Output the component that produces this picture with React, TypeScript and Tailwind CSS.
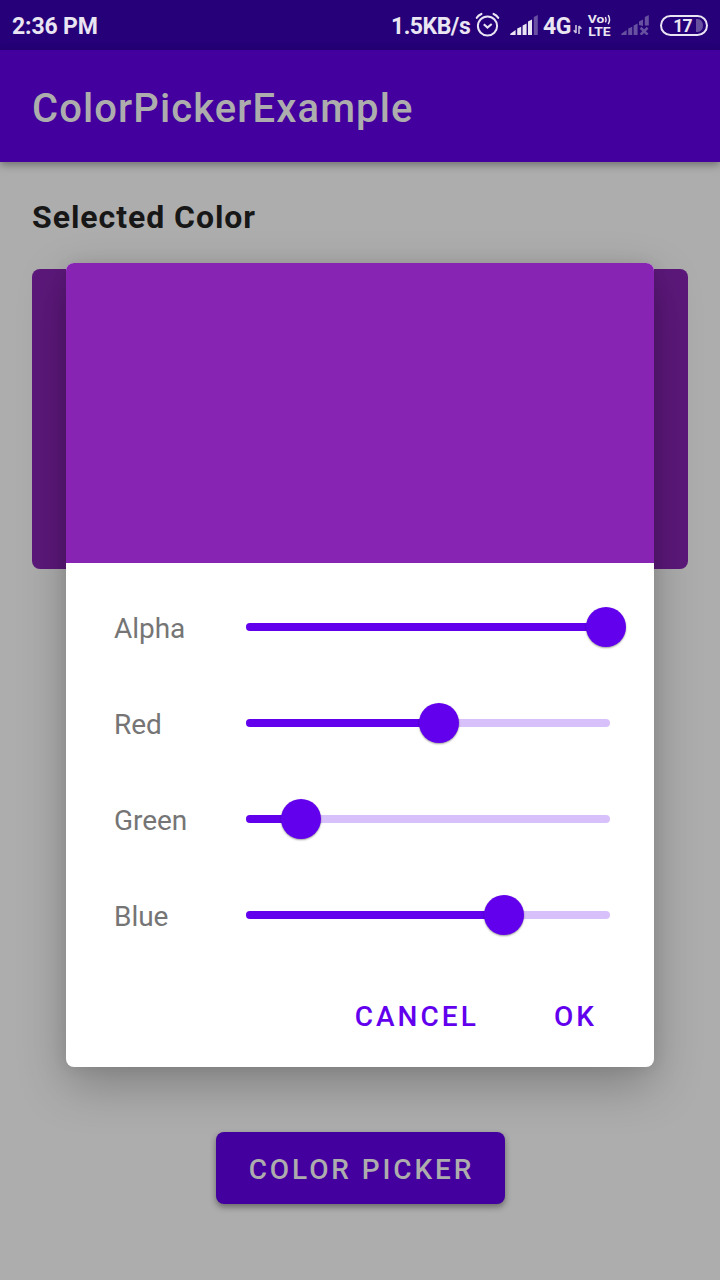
import { useState } from 'react';

type Channel = { name: string; thumb: number };

const CHANNELS: Channel[] = [
  { name: 'Alpha', thumb: 360 },
  { name: 'Red', thumb: 193 },
  { name: 'Green', thumb: 55 },
  { name: 'Blue', thumb: 258 },
];

function AlarmIcon() {
  return (
    <svg className="ml-[6px] shrink-0" width="25" height="26" viewBox="0 0 25 26" fill="none" stroke="#e9e5f2" strokeLinecap="round">
      <circle cx="12.5" cy="14" r="9.6" strokeWidth="2" />
      <path d="M8.8 12.2l3.7 3.4 4.2-3.6" strokeWidth="2.1" strokeLinecap="butt" />
      <path d="M1.8 5.8C2.8 4 4.4 2.7 6.4 1.9M23.2 5.8c-1-1.8-2.6-3.1-4.6-3.9" strokeWidth="2.2" />
    </svg>
  );
}

function SignalIcon() {
  return (
    <svg className="ml-[10px] shrink-0" width="28" height="20" viewBox="0 0 28 20" fill="#e9e5f2">
      <path d="M0.3 20v-1.2L5.6 15V20z" />
      <path d="M7.2 13.4l4-1.6V20h-4zM12.6 10.4l4-1.8V20h-4zM18 6.6l4-2V20h-4z" />
      <path d="M23.8 2l4-2V20h-4z" opacity="0.35" />
    </svg>
  );
}

function NoSignalIcon() {
  return (
    <svg className="ml-[9px] shrink-0" width="28" height="20" viewBox="0 0 28 20" fill="#66509f">
      <path d="M0.3 20v-1.2L5.6 15V20z" />
      <path d="M7.2 13.4l4-1.6V20h-4zM12.6 10.4l4-1.8V20h-4zM18 6.6l4-2V11l-4-1zM23.8 2l4-2V10.6h-4z" />
      <path d="M19.6 12.8l7 6.8M26.6 12.8l-7 6.8" stroke="#66509f" strokeWidth="2.6" />
    </svg>
  );
}

function DataArrows() {
  return (
    <svg className="ml-[2px] mt-[9px] shrink-0" width="9" height="9" viewBox="0 0 9 9" fill="none" stroke="#c8c0dd" strokeWidth="1.6">
      <path d="M3 0v8M3 8L0.8 5.2M6 9V1M6 1l2.4 2.8" />
    </svg>
  );
}

function VolteIcon() {
  return (
    <svg className="ml-[6px] shrink-0 overflow-visible" width="24" height="24" viewBox="0 0 24 24" fill="#e9e5f2" fontFamily="Roboto, sans-serif" fontWeight="700">
      <text x="-0.3" y="10.4" fontSize="11.8" textLength="16.6" lengthAdjust="spacingAndGlyphs">Vo</text>
      <path d="M17.4 4q1.4 2.7 0 5.4M20.2 2.2q2.6 4.5 0 9" fill="none" stroke="#e9e5f2" strokeWidth="1.5" />
      <text x="0.3" y="22.8" fontSize="12.4" textLength="22.4" lengthAdjust="spacingAndGlyphs">LTE</text>
    </svg>
  );
}

function Battery() {
  return (
    <div className="relative ml-[11px] flex h-[21px] w-12 shrink-0 items-center justify-center rounded-full border-2 border-[#e9e5f2]">
      <span className="mr-[3px] mt-px text-[17.5px] font-bold leading-[18px] tracking-[-0.8px]">17</span>
      <svg className="absolute right-[3px] top-[2px]" width="7" height="13" viewBox="0 0 7 13" fill="#66509f">
        <path d="M0 0h1.5C4.8 0 7 3 7 6.5S4.8 13 1.5 13H0z" />
      </svg>
    </div>
  );
}

function StatusBar() {
  return (
    <div className="flex h-[50px] items-center justify-between bg-[#250078] px-3 text-[23px] font-bold leading-none text-[#e9e5f2]">
      <span className="mt-[2px] whitespace-nowrap tracking-[-0.15px]">2:36 PM</span>
      <div className="flex items-center">
        <span className="mt-[2px] w-[78px] whitespace-nowrap tracking-[-0.5px]">1.5KB/s</span>
        <AlarmIcon />
        <SignalIcon />
        <span className="ml-[5px] mt-[2px] w-7 whitespace-nowrap tracking-[-0.4px]">4G</span>
        <DataArrows />
        <VolteIcon />
        <NoSignalIcon />
        <Battery />
      </div>
    </div>
  );
}

function SliderRow({ name, thumb }: Channel) {
  return (
    <div className="flex h-24 items-center">
      <label className="mt-[3px] w-[132px] text-[28px] tracking-[-0.05px] text-[#757575]">{name}</label>
      <div className="relative h-2 w-[364px] rounded-full bg-[#d8c1fa]">
        <div className="h-2 rounded-full bg-[#6200ee]" style={{ width: thumb }} />
        <div
          className="absolute -top-4 size-10 rounded-full bg-[#6200ee] shadow-[0_1px_2px_rgba(0,0,0,0.4)]"
          style={{ left: thumb - 20 }}
        />
      </div>
    </div>
  );
}

function ColorDialog({ onClose }: { onClose: () => void }) {
  return (
    <div className="absolute inset-0 flex flex-col items-center pt-[263px]">
      <div className="h-[804px] w-[588px] rounded-lg bg-white shadow-[0_18px_48px_rgba(0,0,0,0.26),0_0_16px_rgba(0,0,0,0.08)]">
        <div className="h-[300px] rounded-t-lg bg-[#8724b4]" />
        <div className="pl-12 pt-4">
          {CHANNELS.map((c) => (
            <SliderRow key={c.name} {...c} />
          ))}
        </div>
        <div className="flex justify-end gap-[75px] pr-[57px] pt-[34px] text-[28px] font-medium leading-10 tracking-[3.05px] text-[#6200ee]">
          <button onClick={onClose}>CANCEL</button>
          <button onClick={onClose}>OK</button>
        </div>
      </div>
    </div>
  );
}

export default function App() {
  const [open, setOpen] = useState(true);
  return (
    <div className="relative flex h-[1280px] w-[720px] flex-col overflow-hidden bg-[#adadad] font-['Roboto',sans-serif]">
      <StatusBar />
      <header className="flex h-28 items-center bg-[#43009f] pl-8 pt-[6px] text-[40px] font-medium tracking-[1.1px] text-[#adadad] shadow-[0_3px_8px_rgba(0,0,0,0.35)]">
        ColorPickerExample
      </header>
      <main className="flex flex-1 flex-col items-center px-8 pt-8">
        <h1 className="self-start text-[32px] font-bold leading-[46px] tracking-[0.95px] text-[#171717]">Selected Color</h1>
        <div className="mt-[29px] h-[300px] w-full rounded-lg bg-[#5c187a]" />
        <button
          className="mt-[563px] h-[72px] w-[289px] whitespace-nowrap rounded-lg bg-[#43009f] pl-[3px] pt-1 text-[28px] font-medium tracking-[2.9px] text-[#adadad] shadow-[0_3px_6px_rgba(0,0,0,0.4)]"
          onClick={() => setOpen(true)}
        >
          COLOR PICKER
        </button>
      </main>
      {open && <ColorDialog onClose={() => setOpen(false)} />}
    </div>
  );
}
